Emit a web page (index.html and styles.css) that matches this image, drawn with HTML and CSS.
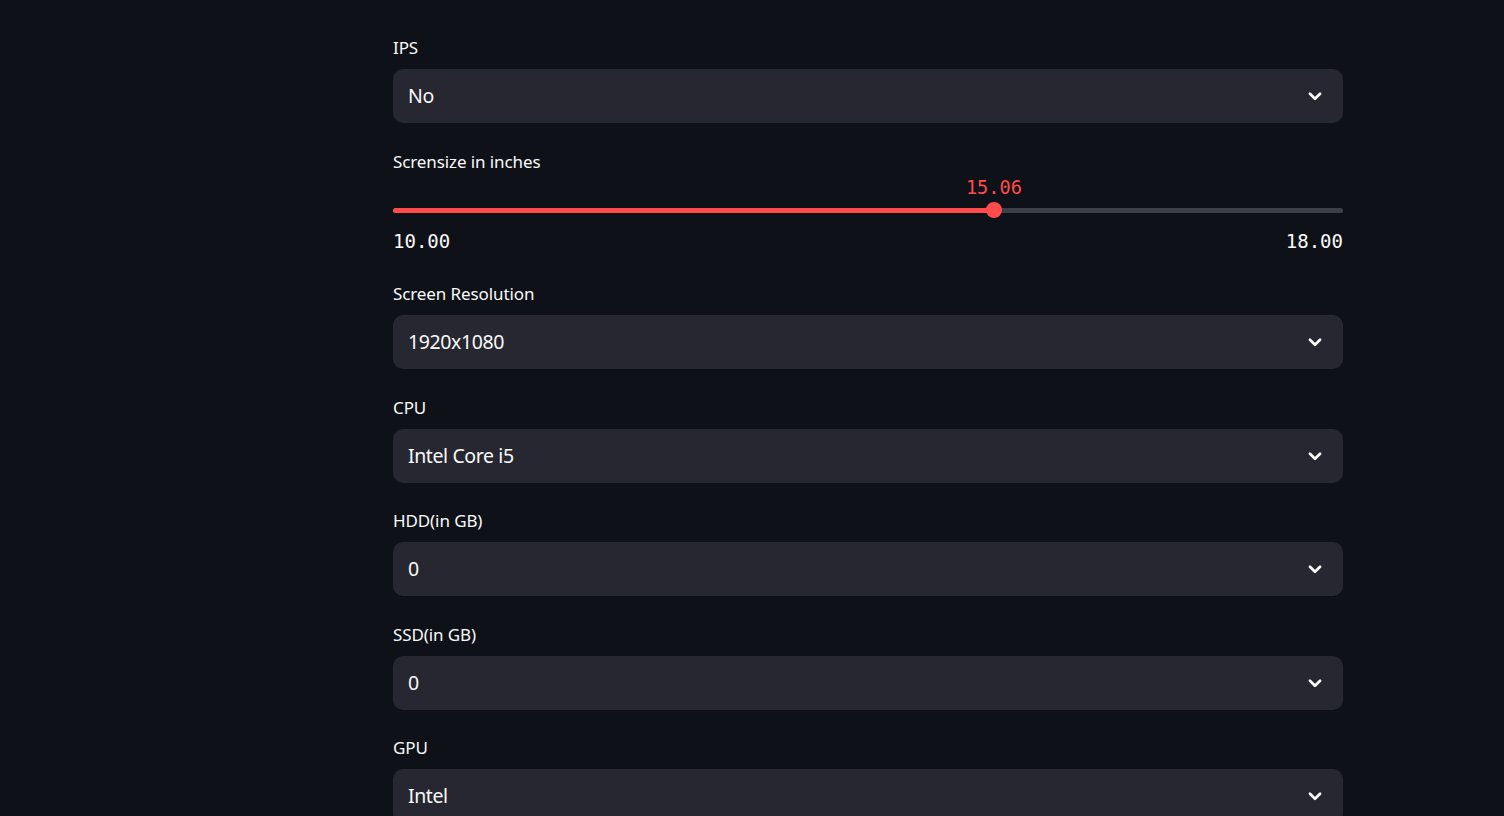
FILE: index.html
```html
<!DOCTYPE html>
<html lang="en">
<head>
<meta charset="utf-8">
<title>Laptop Price Predictor</title>
<link rel="stylesheet" href="styles.css">
</head>
<body>
<main class="main">
  <div class="form">
    <div class="field">
      <label class="label">IPS</label>
      <div class="select"><span class="select-value">No</span><svg class="chev" viewBox="0 0 16 16" width="16" height="16"><path d="M3.5 6 L8 10.5 L12.5 6" fill="none" stroke="#fafafa" stroke-width="2.4" stroke-linecap="round" stroke-linejoin="round"/></svg></div>
    </div>

    <div class="field slider-field">
      <label class="label">Scrensize in inches</label>
      <div class="slider">
        <div class="slider-track">
          <div class="slider-fill" style="width:63.25%"></div>
          <div class="slider-thumb" style="left:63.25%">
            <span class="slider-value">15.06</span>
          </div>
        </div>
        <div class="slider-ticks"><span>10.00</span><span>18.00</span></div>
      </div>
    </div>

    <div class="field">
      <label class="label">Screen Resolution</label>
      <div class="select"><span class="select-value">1920x1080</span><svg class="chev" viewBox="0 0 16 16" width="16" height="16"><path d="M3.5 6 L8 10.5 L12.5 6" fill="none" stroke="#fafafa" stroke-width="2.4" stroke-linecap="round" stroke-linejoin="round"/></svg></div>
    </div>

    <div class="field">
      <label class="label">CPU</label>
      <div class="select"><span class="select-value">Intel Core i5</span><svg class="chev" viewBox="0 0 16 16" width="16" height="16"><path d="M3.5 6 L8 10.5 L12.5 6" fill="none" stroke="#fafafa" stroke-width="2.4" stroke-linecap="round" stroke-linejoin="round"/></svg></div>
    </div>

    <div class="field">
      <label class="label">HDD(in GB)</label>
      <div class="select"><span class="select-value">0</span><svg class="chev" viewBox="0 0 16 16" width="16" height="16"><path d="M3.5 6 L8 10.5 L12.5 6" fill="none" stroke="#fafafa" stroke-width="2.4" stroke-linecap="round" stroke-linejoin="round"/></svg></div>
    </div>

    <div class="field">
      <label class="label">SSD(in GB)</label>
      <div class="select"><span class="select-value">0</span><svg class="chev" viewBox="0 0 16 16" width="16" height="16"><path d="M3.5 6 L8 10.5 L12.5 6" fill="none" stroke="#fafafa" stroke-width="2.4" stroke-linecap="round" stroke-linejoin="round"/></svg></div>
    </div>

    <div class="field">
      <label class="label">GPU</label>
      <div class="select"><span class="select-value">Intel</span><svg class="chev" viewBox="0 0 16 16" width="16" height="16"><path d="M3.5 6 L8 10.5 L12.5 6" fill="none" stroke="#fafafa" stroke-width="2.4" stroke-linecap="round" stroke-linejoin="round"/></svg></div>
    </div>
  </div>
</main>
</body>
</html>
```
FILE: styles.css
```css
html, body {
  margin: 0;
  padding: 0;
  background: #0e1117;
  height: 100%;
  overflow: hidden;
}
body {
  font-family: "Noto Sans", "Open Sans", sans-serif;
  color: #fafafa;
}
.main {
  padding: 36px 0 0 393px;
}
.form {
  width: 950px;
  display: flex;
  flex-direction: column;
  gap: 26.5px;
}
.field {
  display: flex;
  flex-direction: column;
}
.label {
  font-size: 17px;
  line-height: 24px;
  height: 24px;
  margin-bottom: 9px;
  letter-spacing: -0.1px;
  color: #fafafa;
}
.select {
  height: 54px;
  background: #262730;
  border-radius: 10px;
  display: flex;
  align-items: center;
  justify-content: space-between;
  padding: 0 19px 0 15px;
  box-sizing: border-box;
}
.select-value {
  font-size: 19.5px;
  line-height: 28px;
  letter-spacing: -0.4px;
}
.chev {
  display: block;
  width: 18px;
  height: 18px;
}
.slider-field .label {
  margin-bottom: 0;
}
.slider {
  padding-top: 34px;
  padding-bottom: 4px;
}
.slider-track {
  position: relative;
  height: 5px;
  border-radius: 3px;
  background: #3d3f48;
}
.slider-fill {
  height: 100%;
  border-radius: 3px;
  background: #ff4b4b;
}
.slider-thumb {
  position: absolute;
  top: 50%;
  width: 16px;
  height: 16px;
  margin: -8px 0 0 -8px;
  border-radius: 50%;
  background: #ff4b4b;
}
.slider-value {
  position: absolute;
  bottom: 20px;
  left: 50%;
  transform: translateX(-50%);
  font-family: "DejaVu Sans Mono", "Liberation Mono", monospace;
  font-size: 18.6px;
  line-height: 20px;
  color: #ff4b4b;
  white-space: nowrap;
}
.slider-ticks {
  display: flex;
  justify-content: space-between;
  margin-top: 17px;
  font-family: "DejaVu Sans Mono", "Liberation Mono", monospace;
  font-size: 19px;
  line-height: 22px;
  color: #fafafa;
}
```
